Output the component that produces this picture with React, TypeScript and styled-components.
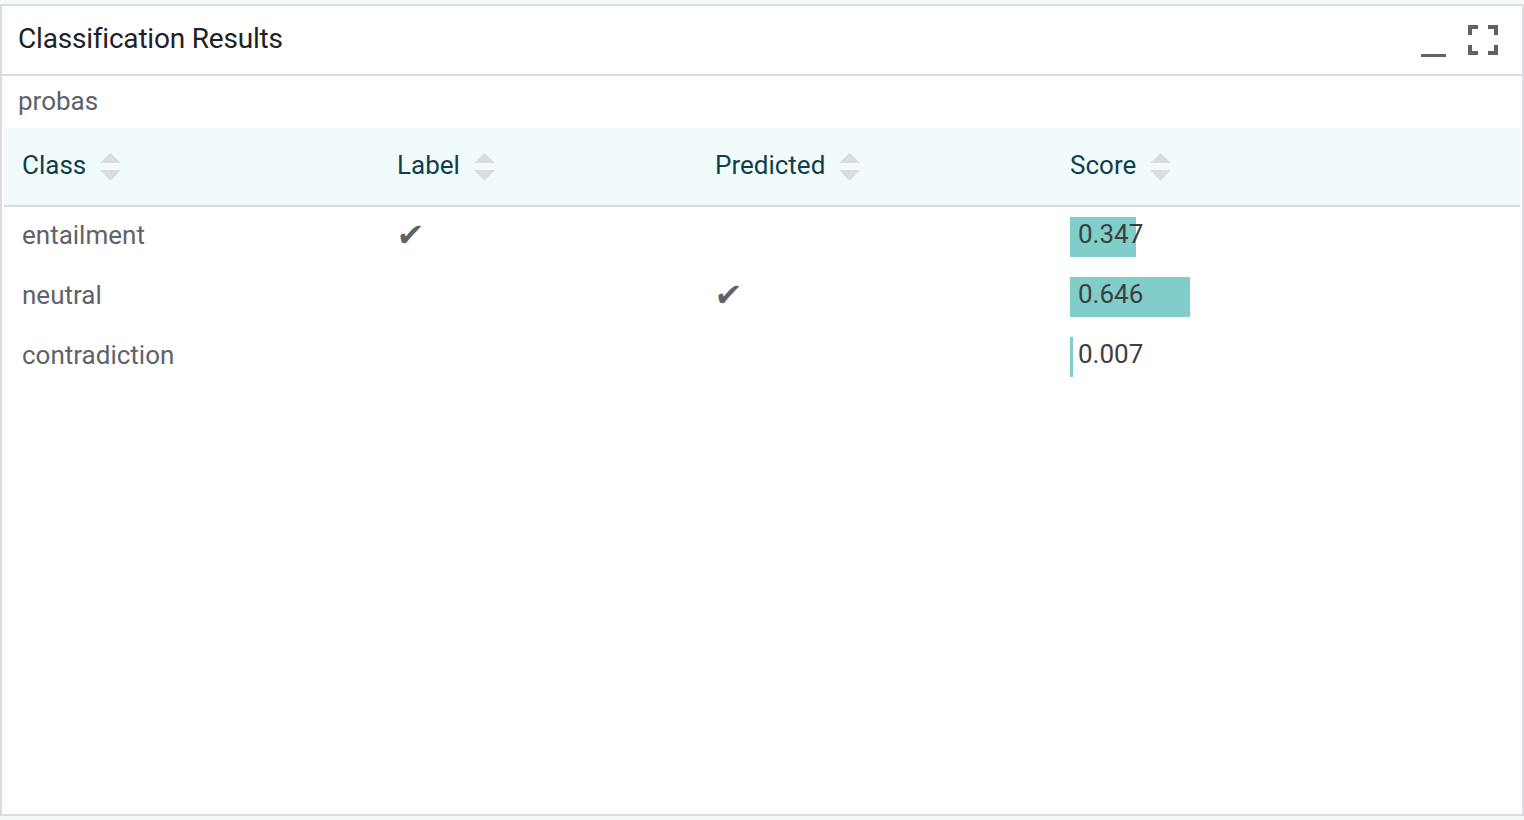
import React from "react";
import styled, { createGlobalStyle } from "styled-components";

const Global = createGlobalStyle`
  html, body { margin: 0; padding: 0; }
  body {
    background: #f5f9f9;
    padding-top: 4px;
    font-family: Roboto, "Liberation Sans", sans-serif;
  }
`;

const Card = styled.div`
  box-sizing: border-box;
  width: 1524px;
  height: 812px;
  background: #ffffff;
  border: 2px solid #dadce0;
  display: flex;
  flex-direction: column;
`;

const Header = styled.div`
  box-sizing: border-box;
  height: 70px;
  border-bottom: 2px solid #dadce0;
  display: flex;
  align-items: center;
  padding: 0 24px 0 16px;
`;

const Title = styled.div`
  flex: 1;
  font-size: 28px;
  color: #202124;
  letter-spacing: -0.2px;
  margin-top: -4px;
`;

const Tools = styled.div`
  display: flex;
  align-items: center;
  gap: 22px;
`;

const ToolButton = styled.div`
  display: flex;
  align-items: center;
  justify-content: center;
`;

const SubLabel = styled.div`
  box-sizing: border-box;
  height: 52px;
  display: flex;
  align-items: center;
  padding: 0 0 2px 16px;
  font-size: 26px;
  color: #5f6368;
`;

const TableWrap = styled.div`
  padding: 0 2px;
`;

const Table = styled.table`
  width: 100%;
  border-collapse: collapse;
  table-layout: fixed;
`;

const HeadRow = styled.tr`
  background: #f2fbfb;
  height: 78px;
  border-bottom: 2px solid #dadce0;
`;

const Th = styled.th<{ $w?: number }>`
  ${(p) => (p.$w ? `width: ${p.$w}px;` : "")}
  text-align: left;
  font-weight: 400;
  font-size: 26px;
  color: #0f3f4d;
  padding: 0 0 4px 18px;
  vertical-align: middle;
`;

const ThInner = styled.div`
  display: flex;
  align-items: center;
  gap: 14px;
`;

const SortWrap = styled.span`
  display: flex;
  margin-top: 4px;
`;

const Row = styled.tr`
  height: 60px;
`;

const Td = styled.td`
  font-size: 26px;
  color: #5f6368;
  padding: 0 0 3px 18px;
  vertical-align: middle;
`;

const ScoreTd = styled.td`
  padding: 1px 0 0 18px;
  vertical-align: middle;
`;

const Check = styled.span`
  display: inline-block;
  font-family: "DejaVu Sans", sans-serif;
  font-size: 32px;
  line-height: 26px;
  color: #5f6368;
  transform: translateY(2px) skewX(-6deg);
`;

const ScoreCell = styled.div`
  position: relative;
  height: 40px;
  display: flex;
  align-items: center;
`;

const Bar = styled.div`
  position: absolute;
  left: 0;
  top: 0;
  height: 40px;
  background: #80cdc9;
`;

const ScoreText = styled.span`
  position: relative;
  padding-left: 8px;
  font-size: 26px;
  color: #3c4043;
  margin-top: -6px;
`;

const SortIcon = () => (
  <svg width="21" height="28" viewBox="0 0 21 28">
    <polygon points="0,10 10.5,0 21,10" fill="#dadce0" />
    <polygon points="0,17 21,17 10.5,28" fill="#dadce0" />
  </svg>
);

const MinimizeIcon = () => (
  <svg width="25" height="34" viewBox="0 0 25 34">
    <rect x="0" y="31" width="25" height="3" fill="#5f6368" />
  </svg>
);

const FullscreenIcon = () => (
  <svg width="30" height="30" viewBox="0 0 30 30" fill="none" stroke="#5f6368" strokeWidth="4">
    <path d="M2 10 V2 H10" />
    <path d="M20 2 H28 V10" />
    <path d="M2 20 V28 H10" />
    <path d="M20 28 H28 V20" />
  </svg>
);

const rows = [
  { cls: "entailment", label: true, pred: false, score: 0.347, w: 66 },
  { cls: "neutral", label: false, pred: true, score: 0.646, w: 120 },
  { cls: "contradiction", label: false, pred: false, score: 0.007, w: 3 },
];

const columns: { name: string; w?: number }[] = [
  { name: "Class", w: 357 },
  { name: "Label", w: 300 },
  { name: "Predicted", w: 337 },
  { name: "Score" },
];

export default function App() {
  return (
    <>
      <Global />
      <Card>
        <Header>
          <Title>Classification Results</Title>
          <Tools>
            <ToolButton>
              <MinimizeIcon />
            </ToolButton>
            <ToolButton>
              <FullscreenIcon />
            </ToolButton>
          </Tools>
        </Header>
        <SubLabel>probas</SubLabel>
        <TableWrap>
          <Table>
            <thead>
              <HeadRow>
                {columns.map((c) => (
                  <Th key={c.name} $w={c.w}>
                    <ThInner>
                      {c.name}
                      <SortWrap>
                        <SortIcon />
                      </SortWrap>
                    </ThInner>
                  </Th>
                ))}
              </HeadRow>
            </thead>
            <tbody>
              {rows.map((r) => (
                <Row key={r.cls}>
                  <Td>{r.cls}</Td>
                  <Td>{r.label ? <Check>✔</Check> : null}</Td>
                  <Td>{r.pred ? <Check>✔</Check> : null}</Td>
                  <ScoreTd>
                    <ScoreCell>
                      <Bar style={{ width: `${r.w}px` }} />
                      <ScoreText>{r.score.toFixed(3)}</ScoreText>
                    </ScoreCell>
                  </ScoreTd>
                </Row>
              ))}
            </tbody>
          </Table>
        </TableWrap>
      </Card>
    </>
  );
}
